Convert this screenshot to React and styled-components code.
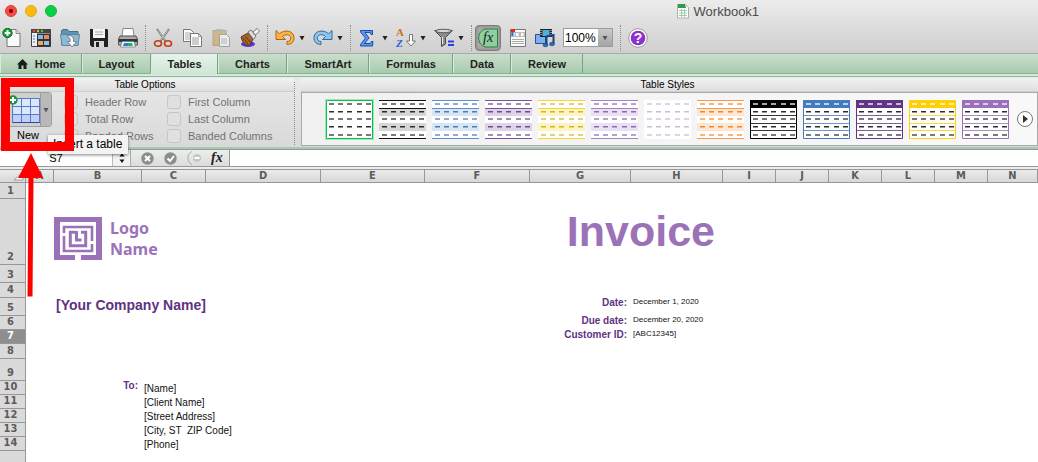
import { Fragment } from 'react';
import styled, { createGlobalStyle, css } from 'styled-components';

const sans = '"Liberation Sans", Arial, sans-serif';
const purple = '#9b72b8';
const darkPurple = '#5f3282';

const GlobalStyle = createGlobalStyle`
  * { box-sizing: border-box; }
  body {
    margin: 0;
    background: #fff;
    font-family: ${sans};
    color: #111;
  }
  button, input, select { font-family: inherit; }
`;

const Window = styled.div`
  position: relative;
  height: 100vh;
  overflow: hidden;
  display: flex;
  flex-direction: column;
`;

const Chrome = styled.header`
  flex: none;
  background: linear-gradient(#ececec, #cfcfcf);
  border-bottom: 1px solid #a8a8a8;
`;

const TitleBar = styled.div`
  display: flex;
  align-items: center;
  gap: 8px;
  height: 22px;
  padding-left: 5px;
`;

const Light = styled.button`
  width: 12px;
  height: 12px;
  padding: 0;
  border: 1px solid ${p => p.$edge};
  border-radius: 50%;
  background: ${p => p.$color};
  display: flex;
  align-items: center;
  justify-content: center;

  i {
    width: 4px;
    height: 4px;
    border-radius: 50%;
    background: #5a0705;
  }
`;

const Title = styled.div`
  display: flex;
  align-items: center;
  gap: 5px;
  margin-left: auto;
  margin-right: 27%;
  font-size: 13px;
  color: #4c4c4c;
`;

const Toolbar = styled.div`
  display: flex;
  align-items: center;
  height: 31px;
  padding-left: 2px;
`;

const ToolGroup = styled.div`
  display: flex;
  align-items: center;
  gap: ${p => p.$gap || 9}px;
`;

const ToolSep = styled.div`
  height: 26px;
  margin: 0 ${p => (p.$tight ? 3 : 7)}px 0 7px;
  border-left: 1px dotted #8c8c8c;
`;

const ToolButton = styled.button`
  display: flex;
  align-items: center;
  gap: 4px;
  padding: 0;
  border: 0;
  background: none;
  opacity: ${p => (p.disabled ? 0.55 : 1)};

  ${p => p.$pressed && css`
    width: 26px;
    height: 26px;
    justify-content: center;
    border: 1px solid #7d7d7d;
    border-radius: 4px;
    background: #a9a9a9;
    box-shadow: inset 0 0 3px #777;
  `}
`;

const Zoom = styled.div`
  display: flex;
  height: 19px;
  width: 50px;
  border: 1px solid #9c9c9c;
  background: #fff;

  input {
    flex: 1;
    min-width: 0;
    padding: 0 0 0 1px;
    border: 0;
    background: none;
    font-size: 12px;
    color: #000;
  }

  button {
    width: 14px;
    padding: 0;
    border: 0;
    background: linear-gradient(#c9c9c9, #a5a5a5);
    display: flex;
    align-items: center;
    justify-content: center;
  }
`;

const Tabs = styled.nav`
  flex: none;
  display: flex;
  height: 20px;
  background: linear-gradient(#c9dfcb, #a9caaf);
  border-bottom: 1px solid #86b695;
`;

const Tab = styled.button`
  display: flex;
  align-items: center;
  justify-content: center;
  gap: 7px;
  width: ${p => p.$width}px;
  padding: 0;
  border: 0;
  border-right: 1px solid #6fa883;
  border-left: 1px solid #d9ecdc;
  background: none;
  font-size: 11px;
  font-weight: bold;
  color: #222;

  ${p => p.$active && css`
    margin-bottom: -1px;
    background: linear-gradient(#e6f3e9, #cfe6d6);
  `}
`;

const Ribbon = styled.section`
  flex: none;
  display: flex;
  border-top: 2px solid #d3eadb;
  border-bottom: 2px solid #a3cbb1;
  box-shadow: inset 0 1px 0 #86bd9b;
  background: linear-gradient(#e9e9e9, #d9d9d9);
`;

const Group = styled.div`
  display: flex;
  flex-direction: column;
  flex: ${p => (p.$grow ? '1' : 'none')};
  min-width: 0;
  width: ${p => (p.$grow ? 'auto' : '294px')};
`;

const GroupTitle = styled.div`
  height: 14px;
  margin-top: 2px;
  padding-right: 4px;
  line-height: 13px;
  font-size: 10px;
  text-align: center;
  color: #000;
  background: linear-gradient(#f2f2f2, #dfdfdf);
  border-bottom: 1px solid #d0d0d0;
`;

const GroupSep = styled.div`
  margin: 6px 6px 2px 0;
  border-left: 1px dotted #8c8c8c;
`;

const OptionsBody = styled.div`
  display: flex;
  padding-left: 4px;
  gap: 12px;
`;

const NewTable = styled.div`
  display: flex;
  flex-direction: column;
  align-items: center;
  width: 48px;
  font-size: 11px;
  color: #000;
`;

const SplitButton = styled.div`
  display: flex;
  width: 48px;
  height: 35px;
  margin-bottom: 2px;
  border: 1px solid #a0a0a0;
  border-radius: 3px;
  background: #cfcfcf;

  button {
    display: flex;
    align-items: center;
    justify-content: center;
    padding: 0;
    border: 0;
    background: none;
  }

  button:first-child { flex: 1; }

  button:last-child {
    width: 11px;
    border-left: 1px solid #999;
    background: #b9b9b9;
  }
`;

const Checks = styled.div`
  display: grid;
  grid-template-columns: 103px 120px;
  grid-auto-rows: 17px;
  align-content: start;
  padding-top: 1px;
`;

const Check = styled.label`
  display: flex;
  align-items: center;
  gap: 7px;
  font-size: 11px;
  white-space: nowrap;
  color: #727272;

  input {
    appearance: none;
    width: 14px;
    height: 14px;
    margin: 0;
    border: 1px solid #c6c6c6;
    border-radius: 3px;
    background: #e0e0e0;
  }
`;

const Gallery = styled.div`
  display: flex;
  align-items: center;
  justify-content: space-between;
  height: 54px;
  margin-bottom: 1px;
  padding: 0 4px 0 24px;
  border: 1px solid #a9a9a9;
  background: linear-gradient(90deg, #f1f1f1, #f8f8f8);
`;

const Thumbs = styled.div`
  display: flex;
  gap: 6px;
`;

const Thumb = styled.button`
  display: flex;
  padding: 0;
  border: 0;
  background: none;
  outline: ${p => (p.$selected ? '1px solid #9fe8b4' : 'none')};
`;

const RoundButton = styled.button`
  display: flex;
  align-items: center;
  justify-content: center;
  width: 16px;
  height: 16px;
  padding: 0;
  border: 1px solid #777;
  border-radius: 50%;
  background: #fff;
`;

const FormulaBar = styled.div`
  flex: none;
  display: flex;
  height: 18px;
  border-top: 1px solid #999;
  border-bottom: 1px solid #999;
  background: #fff;

  input {
    min-width: 0;
    padding: 0;
    border: 0;
    background: none;
    font-size: 11px;
  }
`;

const NameBox = styled.input`
  width: 112px;
  text-align: center;
`;

const Spinner = styled.button`
  display: flex;
  align-items: center;
  justify-content: center;
  width: 18px;
  padding: 0;
  border: 0;
  border-left: 1px solid #bbb;
  background: #f2f2f2;
`;

const FormulaTools = styled.div`
  display: flex;
  align-items: center;
  gap: 10px;
  width: 100px;
  padding-left: 10px;
  border-left: 1px solid #aaa;
  border-right: 1px solid #999;
  background: linear-gradient(#ededed, #dcdcdc);

  button {
    display: flex;
    padding: 0;
    border: 0;
    background: none;
  }
`;

const FxButton = styled.span`
  font: italic bold 14px/14px "Liberation Serif", serif;
  color: #222;
`;

const FormulaInput = styled.input`
  flex: 1;
`;

const Sheet = styled.table`
  width: 100%;
  table-layout: fixed;
  border-spacing: 0;
  border-top: 2px solid #ededed;
  background: #fff;
`;

const headText = css`
  font-family: "DejaVu Sans Condensed", "DejaVu Sans", sans-serif;
  font-size: 11px;
  line-height: 12px;
  font-weight: bold;
  color: #5c5c5c;
`;

const ColHead = styled.th`
  ${headText}
  height: 14px;
  padding: 0;
  border: solid #979797;
  border-width: 1px 1px 1px 0;
  background: linear-gradient(#ebebeb, #d8d8d8);
  text-align: ${p => (p.$corner ? 'right' : 'center')};

  svg { display: block; margin-left: auto; }
`;

const Row = styled.tr`
  height: ${p => p.$height}px;
`;

const RowHead = styled.th`
  ${headText}
  padding: 0 4px 1px 0;
  border: solid #979797;
  border-width: 0 1px 1px 0;
  vertical-align: bottom;
  background: ${p => (p.$selected ? '#8e8e8e' : '#dadada')};
  color: ${p => (p.$selected ? '#fff' : '#5c5c5c')};
`;

const Cell = styled.td`
  padding: 0 2px;
  white-space: pre;
  vertical-align: bottom;
  font-size: 10px;
  line-height: 10px;
  color: #111;
`;

const LogoCell = styled(Cell)`
  padding: 0 0 5px;
`;

const Logo = styled.div`
  display: flex;
  align-items: center;
  gap: 8px;
  font-family: "Noto Sans", sans-serif;
  font-size: 16px;
  line-height: 21px;
  font-weight: bold;
  color: ${purple};
`;

const InvoiceCell = styled(Cell)`
  padding: 0 8px 12px 0;
  text-align: right;
  font-size: 43px;
  line-height: 43px;
  font-weight: bold;
  color: ${purple};
`;

const CompanyCell = styled(Cell)`
  padding-bottom: 3px;
  font-size: 14px;
  line-height: 15px;
  font-weight: bold;
  color: ${darkPurple};
`;

const LabelCell = styled(Cell)`
  padding-right: 4px;
  vertical-align: top;
  text-align: right;
  font-weight: bold;
  color: ${darkPurple};
`;

const DetailCell = styled(Cell)`
  vertical-align: top;
  font-size: 8px;
  line-height: 8px;
`;

const AddressCell = styled(Cell)`
  padding-bottom: 1px;
`;

const Tooltip = styled.div`
  position: absolute;
  left: 48px;
  top: 135px;
  padding: 0 6px 0 5px;
  font-size: 12px;
  line-height: 19px;
  color: #000;
  background: #f3f3f3;
  box-shadow: 0 1px 3px rgba(0, 0, 0, 0.5);
`;

const Highlight = styled.div`
  position: absolute;
  left: 1px;
  top: 78px;
  width: 73px;
  height: 73px;
  border: 9px solid #fe0000;
`;

const Pointer = styled.svg`
  position: absolute;
  left: 17px;
  top: 152px;
`;

const Icon = ({ w = 20, h = 20, children }) => (
  <svg width={w} height={h} viewBox={`0 0 ${w} ${h}`} fill="none" aria-hidden="true">{children}</svg>
);

const Caret = ({ color = '#222' }) => (
  <Icon w={6} h={6}><path d="M0.500 1h5L3 5.500z" fill={color} /></Icon>
);

const NewIcon = () => (
  <Icon>
    <path d="M5 1.500h9l4 4V18.500H5z" fill="#fafafa" stroke="#777" />
    <path d="M14 1.500v4h4" fill="#ddd" stroke="#888" />
    <circle cx="5.500" cy="5" r="4.700" fill="#17993a" stroke="#0c7428" />
    <path d="M5.500 2.200v5.600M2.700 5h5.600" stroke="#fff" strokeWidth="2" />
  </Icon>
);

const GalleryIcon = () => (
  <Icon>
    <path d="M0.500 1.500h19v17h-19z" fill="#e9eef5" stroke="#444" />
    <path d="M0 1h20v4H0z" fill="#444" />
    <circle cx="3" cy="3" r="1.200" fill="#f44" /><circle cx="7" cy="3" r="1.200" fill="#fb2" /><circle cx="11" cy="3" r="1.200" fill="#3d4" />
    <path d="M6 5.500h13.500v13H6z" fill="#333" />
    <path d="M7 7h5v4H7z" fill="#7ab8f0" /><path d="M13 7h5v4h-5z" fill="#f0895a" />
    <path d="M7 13h5v4H7z" fill="#f3a15c" /><path d="M13 13h5v4h-5z" fill="#8cc6ee" />
    <path d="M2 8h2M2 11h2M2 14h2" stroke="#4a7fd0" />
  </Icon>
);

const OpenIcon = () => (
  <Icon>
    <path d="M1.500 16.500v-14l1-1h5l1.500 2h9v13z" fill="#5f93b4" stroke="#47718d" />
    <path d="M0.500 6.500h19l-1.500 11h-16z" fill="#8fb9d3" stroke="#5a87a4" />
    <path d="M7 7.500c5-.5 7 2 6.500 6h3L12 19l-4.500-5.500h2.800c.2-3-1-4.500-3.300-6z" fill="#fff" stroke="#667" strokeWidth=".7" />
  </Icon>
);

const SaveIcon = () => (
  <Icon>
    <path d="M1 1h17l1 1v17H3l-2-2z" fill="#222" />
    <path d="M4 1h12v9H4z" fill="#f5f5f5" />
    <path d="M6 4h8M6 6.500h8" stroke="#aaa" />
    <path d="M5 13h10v6H5z" fill="#d8d8d8" /><path d="M7 14h3v5H7z" fill="#222" />
  </Icon>
);

const PrintIcon = () => (
  <Icon>
    <path d="M5 .5h10l1 8H4z" fill="#fff" stroke="#888" />
    <path d="M2 8h16l1.500 3v6h-19v-6z" fill="#aaa" stroke="#555" />
    <path d="M1 11h18v3H1z" fill="#333" />
    <path d="M4 13.500h12l1.500 5.500h-15z" fill="#f4f8ff" stroke="#777" strokeWidth=".7" />
    <path d="M6 15h4v3H5z" fill="#1b84d6" /><path d="M10 15h4l1 3h-5z" fill="#24af76" />
  </Icon>
);

const CutIcon = () => (
  <Icon>
    <path d="M4 1l8.500 12M16 1L7.500 13" stroke="#6e6e6e" strokeWidth="2" />
    <path d="M4.500 1.500l8 11M15.500 1.500l-8 11" stroke="#ddd" strokeWidth=".8" />
    <ellipse cx="5" cy="15.500" rx="3.500" ry="2.800" stroke="#c43d13" strokeWidth="1.600" />
    <ellipse cx="15" cy="15.500" rx="3.500" ry="2.800" stroke="#c43d13" strokeWidth="1.600" />
  </Icon>
);

const CopyIcon = () => (
  <Icon>
    <path d="M1.500 1.500h7l3 3v9h-10z" fill="#fff" stroke="#777" />
    <path d="M3 5h6M3 7h6M3 9h6M3 11h6" stroke="#aaa" />
    <path d="M8.500 5.500h8l3 3v10h-11z" fill="#fff" stroke="#777" />
    <path d="M16.500 5.500v3h3M10 10h7M10 12h7M10 14h7M10 16h7" stroke="#999" />
  </Icon>
);

const PasteIcon = () => (
  <Icon>
    <path d="M2 2.500h13v15H2z" fill="#c79a50" stroke="#a67c3a" />
    <path d="M5 1h7v3H5z" fill="#999" />
    <path d="M8.500 6.500h7l3 3v9h-10z" fill="#fff" stroke="#777" />
    <path d="M10 11h6M10 13h6M10 15h6" stroke="#999" />
  </Icon>
);

const BrushIcon = () => (
  <Icon>
    <ellipse cx="8" cy="16" rx="7" ry="3" fill="#5a34d8" />
    <path d="M1 9l7-4 5 6-3 6c-4 1-7-1-9-8z" fill="#a5642a" stroke="#5e3513" />
    <path d="M3 10l5 6M5.500 8.500l5 6" stroke="#5e3513" />
    <path d="M8 4l3-2 5 6-2.500 3.500z" fill="#ddd" stroke="#777" />
    <path d="M13 4l4-3.500 2.500 2.500-4 4z" fill="#f6f6f6" stroke="#777" />
  </Icon>
);

const UndoIcon = () => (
  <Icon><path d="M1 2.500l3.500 3.200C9 1.500 18.500 2 19 9.500c.3 4.500-3 7-7 7v-3c2.500 0 4-1.500 3.700-4C15.200 6.500 10.500 5.500 7.500 8.500l3 3H1z" fill="#fbb24b" stroke="#b3640b" /></Icon>
);

const RedoIcon = () => (
  <Icon><path d="M19 2.500l-3.500 3.200C11 1.500 1.500 2 1 9.500c-.3 4.500 3 7 7 7v-3c-2.500 0-4-1.500-3.700-4C4.800 6.500 9.500 5.500 12.500 8.500l-3 3H19z" fill="#8fc4ec" stroke="#2c6ba7" /></Icon>
);

const SumIcon = () => (
  <Icon><path d="M2.500 2.500h12v4h-1.500l-1-2H7l4 5.500-4.500 5.500H12l1.500-2H15l-.5 4.500h-12v-1.500L7.500 10l-5-6z" fill="#5b95ee" stroke="#174dae" /></Icon>
);

const SortIcon = () => (
  <Icon>
    <text x="0" y="8" fontFamily="Liberation Serif" fontWeight="bold" fontSize="11" fill="#c8741c">A</text>
    <text x="0" y="19" fontFamily="Liberation Serif" fontWeight="bold" fontStyle="italic" fontSize="11" fill="#2d61d8">Z</text>
    <path d="M13.500 6.500h3V13h3L15 18l-4.500-5h3z" fill="#fff" stroke="#777" />
  </Icon>
);

const FilterIcon = () => (
  <Icon>
    <path d="M.5 2.500h18l-7 7V16l-4 2.500v-9z" fill="#8c8c8c" stroke="#4c4c4c" />
    <ellipse cx="9.500" cy="3" rx="8" ry="1.700" fill="#d9d9d9" stroke="#555" />
    <path d="M8.500 9v7" stroke="#eee" />
    <path d="M14 13.500h6M14 17h6" stroke="#2746e0" strokeWidth="2" />
  </Icon>
);

const FxIcon = () => (
  <Icon>
    <path d="M7 1h12.500v18H7C-1.500 16-1.500 4 7 1z" fill="#8fce9d" stroke="#2f7a45" />
    <text x="5" y="14" fontFamily="Liberation Serif" fontStyle="italic" fontSize="14" fill="#122">fx</text>
  </Icon>
);

const FormIcon = () => (
  <Icon w={18}>
    <path d="M1.500 1.500h15v17h-15z" fill="#fafafa" stroke="#777" />
    <path d="M2 4h14v5H2z" fill="#bbb" />
    <path d="M3 5h2.500v3H3zM7 5h2.500v3H7zM12 5h2.500v3H12z" fill="#fff" />
    <path d="M2 1h4v3H2z" fill="#e22b20" /><path d="M3.500 4v4" stroke="#2a70d8" strokeWidth="2" />
    <path d="M3 11.500h12M3 13.500h12M3 15.500h12" stroke="#aaa" />
  </Icon>
);

const MediaIcon = () => (
  <Icon>
    <path d="M.5 6.500h10v9H.5z" fill="#7db0ec" stroke="#2a4fa0" />
    <path d="M5 1h12v8H5z" fill="#222" /><path d="M7.500 2h7v6h-7z" fill="#4fb0dd" />
    <path d="M6 2v6M16 2v6" stroke="#fff" strokeDasharray="1 1" />
    <path d="M11.500 17V8.500l7-1.500v8.500" stroke="#173f7c" strokeWidth="2" />
    <ellipse cx="10.500" cy="17" rx="2.500" ry="1.800" fill="#2d6bb5" stroke="#173f7c" strokeWidth=".6" />
    <ellipse cx="17" cy="16" rx="2.500" ry="1.800" fill="#2d6bb5" stroke="#173f7c" strokeWidth=".6" />
  </Icon>
);

const HelpIcon = () => (
  <Icon>
    <circle cx="10" cy="10" r="9.300" fill="#fff" stroke="#999" />
    <circle cx="10" cy="10" r="7.300" fill="#8e2fd0" />
    <text x="10" y="15" textAnchor="middle" fontFamily="Liberation Sans" fontWeight="bold" fontSize="14" fill="#fff">?</text>
  </Icon>
);

const DocIcon = () => (
  <Icon w={12} h={16}>
    <path d="M.5 1.500h8l3 3v10.500H.5z" fill="#fff" stroke="#a5b5a5" />
    <path d="M1 1h7l1 4H1z" fill="#2f9c4b" />
    <path d="M2 7.500h8M2 10h8M2 12.500h8M4.500 6v8M7.500 6v8" stroke="#8fbf98" strokeWidth=".8" />
  </Icon>
);

const HomeIcon = () => (
  <Icon w={11} h={10}><path d="M5.500 0L11 5.500H9.500V10h-3V6.500h-2V10h-3V5.500H0z" fill="#1c1c1c" /></Icon>
);

const TableIcon = () => (
  <Icon w={34} h={30}>
    <path d="M6 3h27v24H6z" fill="#dbe7fc" />
    <path d="M6 19h27v8H6z" fill="#c0d0f7" />
    <path d="M6.500 3.500h27v24h-27zM15.500 3v24M24.500 3v24M6 11.500h27M6 19.500h27" stroke="#5878c8" />
    <path d="M6.500 27.500h27" stroke="#2c49a0" />
    <circle cx="7" cy="5" r="4.700" fill="#17993a" />
    <path d="M7 2v6M4 5h6" stroke="#fff" strokeWidth="2" />
  </Icon>
);

const LogoMark = () => (
  <svg width="48" height="43" viewBox="0 0 48 43" fill="none" aria-hidden="true">
    <path d="M0 0h48v43H27v-5h15V5H6v33h15v5H0z" fill={purple} />
    <path d="M10 16V10h28v14M10 19v15h28v-7" stroke={purple} strokeWidth="2.600" />
    <path d="M21 15.300h-4.700v13.400h15.400V15.300H27" stroke={purple} strokeWidth="3" />
    <path d="M22.500 14v9h5" stroke={purple} strokeWidth="3" />
  </svg>
);

const dashRows = [3, 11, 18, 26, 34];
const dashCols = [3, 12, 21, 31, 40];

const StyleThumb = ({ kind, color, band, dash, selected }) => (
  <Thumb $selected={selected} aria-label={`${kind} table style`}>
    <Icon w={47} h={39}>
      <rect width="47" height="39" fill="#fff" />
      {kind === 'banded' && <>
        <path d="M0 9h47v7H0zM0 23h47v8H0z" fill={band} />
        <path d="M0 .5h47M0 8.500h47M0 38.500h47" stroke={color} />
      </>}
      {kind === 'grid' && <>
        <path d="M0 15.500h47M0 23.500h47M0 30.500h47" stroke={color} opacity=".8" />
        <path d="M.5 .5h46v38H.5z" stroke={color} />
        <path d="M0 0h47v8H0z" fill={color} />
      </>}
      {selected && <path d="M.5 .5h46v38H.5z" stroke={color} />}
      {dashRows.map((y, r) => dashCols.map(x => (
        <rect
          key={`${x}-${y}`} x={x} y={y} width="5" height={r % 2 ? 1.500 : 2}
          fill={kind === 'grid' && r === 0 ? '#fff' : dash}
          opacity={kind === 'grid' && r === 0 ? 0.65 : (r % 2 ? 0.95 : 0.6)}
        />
      )))}
    </Icon>
  </Thumb>
);

const styles = [
  { kind: 'plain', color: '#00c44f', dash: '#222', selected: true },
  { kind: 'banded', color: '#111', band: '#d6d6d6', dash: '#222' },
  { kind: 'banded', color: '#5a8fc8', band: '#d8e6f3', dash: '#4677b0' },
  { kind: 'banded', color: '#7a539a', band: '#dfd3e8', dash: '#68448a' },
  { kind: 'banded', color: '#f7d32c', band: '#fdf4c6', dash: '#d4b01a' },
  { kind: 'banded', color: '#a384c0', band: '#e9e0f1', dash: '#8b61b2' },
  { kind: 'faint', color: '#fff', dash: '#c9b6dc' },
  { kind: 'banded', color: '#f79a4e', band: '#fde6d4', dash: '#f58220' },
  { kind: 'grid', color: '#000', dash: '#222' },
  { kind: 'grid', color: '#447bbf', dash: '#222' },
  { kind: 'grid', color: '#613586', dash: '#222' },
  { kind: 'grid', color: '#fdd008', dash: '#222' },
  { kind: 'grid', color: '#9b6fba', dash: '#222' }
];

const toolGroups = [
  { items: [['New', NewIcon], ['Gallery', GalleryIcon], ['Open', OpenIcon], ['Save', SaveIcon], ['Print', PrintIcon]] },
  { items: [['Cut', CutIcon], ['Copy', CopyIcon], ['Paste', PasteIcon, { disabled: true }], ['Format', BrushIcon]] },
  { gap: 8, items: [['Undo', UndoIcon, { menu: true }], ['Redo', RedoIcon, { menu: true }]] },
  { gap: 8, items: [['AutoSum', SumIcon, { menu: true }], ['Sort', SortIcon, { menu: true }], ['Filter', FilterIcon, { menu: true }]] }
];

const tabs = [
  ['Home', 82], ['Layout', 69], ['Tables', 67], ['Charts', 69],
  ['SmartArt', 82], ['Formulas', 84], ['Data', 58], ['Review', 72]
];

const options = ['Header Row', 'First Column', 'Total Row', 'Last Column', 'Banded Rows', 'Banded Columns'];

const columns = [
  ['A', 28], ['B', 88], ['C', 64], ['D', 115], ['E', 104], ['F', 105], ['G', 101],
  ['H', 92], ['I', 53], ['J', 53], ['K', 53], ['L', 53], ['M', 53], ['N']
];

const detail = (label, value) => (
  <>
    <LabelCell>{label}</LabelCell>
    <DetailCell>{value}</DetailCell>
  </>
);

const address = (value, label = '') => (
  <>
    <Cell />
    <LabelCell>{label}</LabelCell>
    <AddressCell colSpan={2}>{value}</AddressCell>
  </>
);

const rows = [
  [16],
  [66, <>
    <Cell />
    <LogoCell colSpan={2}><Logo><LogoMark /><div>Logo<br />Name</div></Logo></LogoCell>
    <Cell colSpan={3} />
    <InvoiceCell colSpan={2}>Invoice</InvoiceCell>
  </>],
  [18],
  [15],
  [18, <>
    <Cell />
    <CompanyCell colSpan={2}>[Your Company Name]</CompanyCell>
    <Cell colSpan={3} />
    {detail('Date:', 'December 1, 2020')}
  </>],
  [14, <><Cell colSpan={6} />{detail('Due date:', 'December 20, 2020')}</>],
  [14, <><Cell colSpan={6} />{detail('Customer ID:', '[ABC12345]')}</>],
  [15],
  [22],
  [14, address('[Name]', 'To:')],
  [14, address('[Client Name]')],
  [14, address('[Street Address]')],
  [14, address('[City, ST  ZIP Code]')],
  [14, address('[Phone]')],
  [28]
];

const App = () => (
  <Window>
    <GlobalStyle />
    <Chrome>
      <TitleBar>
        <Light $color="#fb4948" $edge="#df3b3a" aria-label="Close"><i /></Light>
        <Light $color="#fdb90b" $edge="#e2a32b" aria-label="Minimize" />
        <Light $color="#05d045" $edge="#19b53f" aria-label="Zoom" />
        <Title><DocIcon />Workbook1</Title>
      </TitleBar>
      <Toolbar>
        {toolGroups.map(({ gap, items }, i) => (
          <Fragment key={i}>
            <ToolGroup $gap={gap}>
              {items.map(([name, Glyph, opts = {}]) => (
                <ToolButton key={name} aria-label={name} disabled={opts.disabled}>
                  <Glyph />
                  {opts.menu && <Caret />}
                </ToolButton>
              ))}
            </ToolGroup>
            <ToolSep $tight={i === 3} />
          </Fragment>
        ))}
        <ToolGroup $gap={8}>
          <ToolButton $pressed aria-label="Formula Builder"><FxIcon /></ToolButton>
          <ToolButton aria-label="Toolbox"><FormIcon /></ToolButton>
          <ToolButton aria-label="Media"><MediaIcon /></ToolButton>
          <Zoom>
            <input aria-label="Zoom level" defaultValue="100%" />
            <button aria-label="Zoom levels"><Caret color="#555" /></button>
          </Zoom>
        </ToolGroup>
        <ToolSep />
        <ToolButton aria-label="Help"><HelpIcon /></ToolButton>
      </Toolbar>
    </Chrome>

    <Tabs>
      {tabs.map(([name, width]) => (
        <Tab key={name} $width={width} $active={name === 'Tables'}>
          {name === 'Home' && <HomeIcon />}
          {name}
        </Tab>
      ))}
    </Tabs>

    <Ribbon>
      <Group>
        <GroupTitle>Table Options</GroupTitle>
        <OptionsBody>
          <NewTable>
            <SplitButton>
              <button aria-label="New table"><TableIcon /></button>
              <button aria-label="New table menu"><Caret color="#555" /></button>
            </SplitButton>
            New
          </NewTable>
          <Checks>
            {options.map(name => (
              <Check key={name}><input type="checkbox" disabled />{name}</Check>
            ))}
          </Checks>
        </OptionsBody>
      </Group>
      <GroupSep />
      <Group $grow>
        <GroupTitle>Table Styles</GroupTitle>
        <Gallery>
          <Thumbs>
            {styles.map((style, i) => <StyleThumb key={i} {...style} />)}
          </Thumbs>
          <RoundButton aria-label="More styles">
            <Icon w={6} h={8}><path d="M1 0l5 4-5 4z" fill="#333" /></Icon>
          </RoundButton>
        </Gallery>
      </Group>
    </Ribbon>

    <FormulaBar>
      <NameBox aria-label="Name box" defaultValue="S7" />
      <Spinner aria-label="Cell names">
        <Icon w={6} h={12}><path d="M.5 4.500h5L3 1zM.5 7.500h5L3 11z" fill="#111" /></Icon>
      </Spinner>
      <FormulaTools>
        <button aria-label="Cancel">
          <Icon w={13} h={13}><circle cx="6.500" cy="6.500" r="6.200" fill="#8d8d8d" /><path d="M4 4l5 5M9 4l-5 5" stroke="#fff" strokeWidth="2" /></Icon>
        </button>
        <button aria-label="Enter">
          <Icon w={13} h={13}><circle cx="6.500" cy="6.500" r="6.200" fill="#8d8d8d" /><path d="M3.500 6.500l2.500 2.500 4-5" stroke="#fff" strokeWidth="2" /></Icon>
        </button>
        <Icon w={14} h={14}>
          <path d="M5 .5C-.5 3-.5 11 5 13.500" stroke="#aaa" />
          <circle cx="10" cy="7" r="4" fill="#c6c6c6" /><path d="M7.500 7h5" stroke="#fff" strokeWidth="2" />
        </Icon>
        <FxButton>fx</FxButton>
      </FormulaTools>
      <FormulaInput aria-label="Formula" />
    </FormulaBar>

    <Sheet>
      <colgroup>
        <col width="26" />
        {columns.map(([name, width]) => <col key={name} width={width} />)}
      </colgroup>
      <thead>
        <tr>
          <ColHead $corner><Icon w={11} h={9}><path d="M9 0v8H0z" fill="#fff" stroke="#999" /></Icon></ColHead>
          {columns.map(([name]) => <ColHead key={name}>{name}</ColHead>)}
        </tr>
      </thead>
      <tbody>
        {rows.map(([height, cells], i) => (
          <Row key={i} $height={height}>
            <RowHead $selected={i === 6}>{i < 14 ? i + 1 : ''}</RowHead>
            {cells}
          </Row>
        ))}
      </tbody>
    </Sheet>

    <Tooltip role="tooltip">Insert a table</Tooltip>
    <Highlight />
    <Pointer width="28" height="146" viewBox="0 0 28 146" aria-hidden="true">
      <path d="M14 1L26 26h-9.500L15.500 144.500h-5L11.500 26H1z" fill="#fe0000" />
    </Pointer>
  </Window>
);

export default App;
